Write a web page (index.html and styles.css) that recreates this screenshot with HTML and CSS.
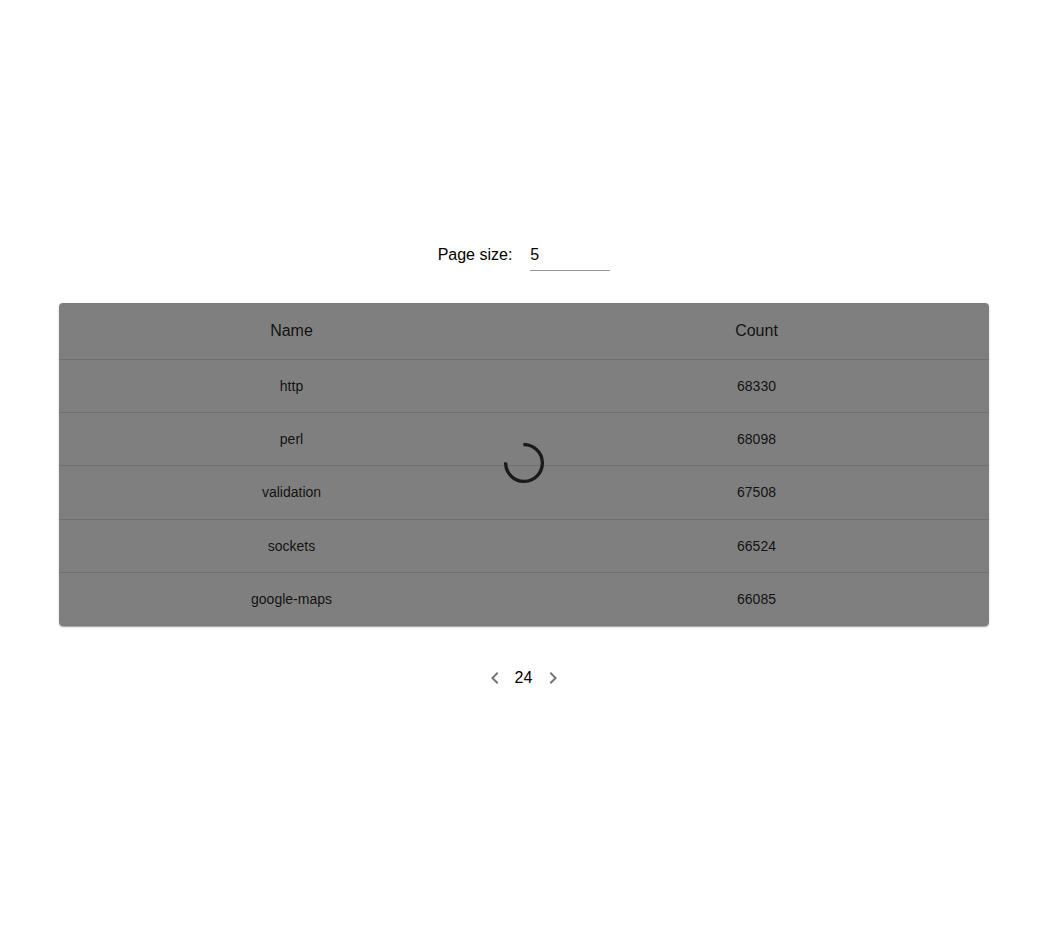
FILE: index.html
```html
<!DOCTYPE html>
<html>
<head>
<meta charset="utf-8">
<link rel="stylesheet" href="styles.css">
</head>
<body>
<div class="page">
  <div class="size-row">
    <label class="size-label">Page size:</label>
    <div class="size-input"><span>5</span></div>
  </div>
  <div class="paper">
    <div class="table">
      <div class="row head"><div class="cell">Name</div><div class="cell">Count</div></div>
      <div class="row"><div class="cell">http</div><div class="cell">68330</div></div>
      <div class="row"><div class="cell">perl</div><div class="cell">68098</div></div>
      <div class="row"><div class="cell">validation</div><div class="cell">67508</div></div>
      <div class="row"><div class="cell">sockets</div><div class="cell">66524</div></div>
      <div class="row last"><div class="cell">google-maps</div><div class="cell">66085</div></div>
    </div>
    <div class="overlay">
      <svg class="spinner" width="40" height="40" viewBox="22 22 44 44">
        <circle cx="44" cy="44" r="20.2" fill="none" stroke="#1a1a1a" stroke-width="3.6" stroke-dasharray="96 200" transform="rotate(-92 44 44)"/>
      </svg>
    </div>
  </div>
  <div class="pager">
    <button class="nav"><svg width="24" height="24" viewBox="0 0 24 24"><path d="M15.41 7.41 14 6l-6 6 6 6 1.41-1.41L10.83 12z" fill="#757575"/></svg></button>
    <span class="num">24</span>
    <button class="nav next"><svg width="24" height="24" viewBox="0 0 24 24"><path d="M10 6 8.59 7.41 13.17 12l-4.58 4.59L10 18l6-6z" fill="#757575"/></svg></button>
  </div>
</div>
</body>
</html>
```

FILE: styles.css
```css
html, body {
  margin: 0;
  padding: 0;
  background: #fff;
  font-family: "Liberation Sans", Arial, sans-serif;
  color: rgba(0,0,0,0.87);
}
.page {
  padding: 238px 57px 0 59px;
  display: flex;
  flex-direction: column;
  align-items: center;
}
.size-row {
  display: flex;
  align-items: center;
  gap: 18px;
  height: 33px;
  font-size: 16px;
}
.size-label {
  color: #000;
}
.size-input {
  width: 80px;
  height: 32px;
  border-bottom: 1px solid #949494;
  display: flex;
  align-items: center;
  box-sizing: border-box;
  color: #000;
  padding-top: 1px;
}
.paper {
  margin-top: 32px;
  width: 930px;
  position: relative;
  border-radius: 4px;
  box-shadow: 0 2px 1px -1px rgba(0,0,0,0.2), 0 1px 1px 0 rgba(0,0,0,0.14), 0 1px 3px 0 rgba(0,0,0,0.12);
  background: #fff;
}
.table { display: flex; flex-direction: column; }
.row {
  display: grid;
  grid-template-columns: 1fr 1fr;
  height: 53.2px;
  border-bottom: 1px solid #e0e0e0;
  box-sizing: border-box;
  font-size: 14px;
  align-items: center;
}
.row.head { height: 57px; font-size: 16px; }
.row.last { border-bottom: none; }
.cell { text-align: center; }
.overlay {
  position: absolute;
  inset: 0;
  background: rgba(0,0,0,0.5);
  border-radius: 4px;
  display: flex;
  align-items: center;
  justify-content: center;
}
.spinner { display: block; margin: 0 1px 2px 0; }
.pager {
  margin-top: 40px;
  display: flex;
  align-items: center;
  gap: 8px;
}
.nav {
  border: none;
  background: none;
  padding: 0;
  width: 24px;
  height: 24px;
  display: flex;
  align-items: center;
  justify-content: center;
}
.nav.next { margin-left: 1px; }
.nav svg { width: 24px; height: 24px; display: block; }
.num { font-size: 16px; color: #000; }
```
